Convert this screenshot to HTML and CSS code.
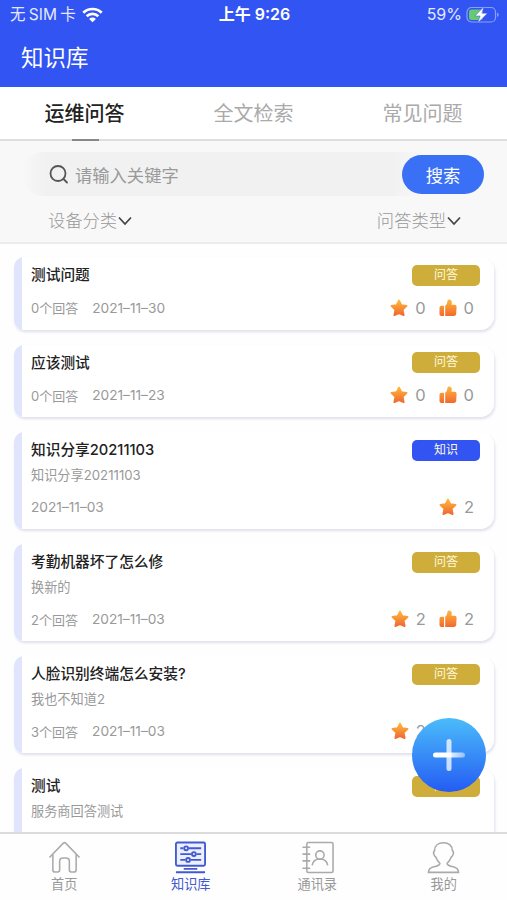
FILE: index.html
```
<!DOCTYPE html>
<html lang="zh-CN">
<head>
  <meta charset="UTF-8" />
  <meta name="viewport" content="width=device-width, initial-scale=1" />
  <title>知识库</title>
  <link rel="stylesheet" href="styles.css">
</head>
<body>
  <svg class="defs" width="0" height="0">
    <defs>
      <linearGradient id="orange" x1="0" y1="0" x2="0" y2="1">
        <stop offset="0" stop-color="#fcb93c" />
        <stop offset="1" stop-color="#f2682e" />
      </linearGradient>
      <linearGradient id="plus" x1="0" y1="0" x2="1" y2="0">
        <stop offset="0.4" stop-color="#fff" />
        <stop offset="1" stop-color="#fff" stop-opacity="0.45" />
      </linearGradient>
      <symbol id="star" viewBox="0 0 18 18">
        <path d="M9 1.4 11.3 6l5.3.8-3.9 3.8 1 5.6L9 14.3l-4.7 1.9 1-5.6L1.4 6.8 6.7 6Z" fill="url(#orange)" stroke="url(#orange)" stroke-width="1.7" stroke-linejoin="round" />
      </symbol>
      <symbol id="thumb" viewBox="0 0 18 18">
        <path d="M2.4 6.8H5v10.300H2.400Q.500 17.100.500 15.300V8.700Q.500 6.800 2.400 6.800ZM6.200 6.800Q8.300 5.300 8.300 2.700 8.300.500 10 .500 12.800.500 12.800 3.500L12.500 5.800H15.500Q17.700 5.800 17.600 8L17.200 15Q17 17.100 14.800 17.100H6.200Z" fill="url(#orange)" />
      </symbol>
    </defs>
  </svg>

  <header class="header">
    <div class="status">
      <div class="carrier">
        <span>无 SIM 卡</span>
        <svg width="21" height="16" viewBox="0 0 21 16" fill="none" stroke="#fff" stroke-width="2.7">
          <path d="M1.300 5.800a13 13 0 0 1 18.400 0M4.700 9.300a8.200 8.200 0 0 1 11.600 0" />
          <path d="M7.100 11.900a4.900 4.900 0 0 1 6.800 0L10.500 15.300Z" fill="#fff" stroke="none" />
        </svg>
      </div>
      <div class="time">上午 9:26</div>
      <div class="battery">
        <span>59%</span>
        <svg width="33" height="18" viewBox="0 0 33 18">
          <rect x="1" y="1.500" width="28.500" height="14.500" rx="4.500" fill="none" stroke="#8c9ff8" stroke-width="1.200" />
          <path d="M31 6.500v4.500q1.800-.7 1.800-2.250T31 6.500Z" fill="#8c9ff8" />
          <rect x="3" y="3.500" width="14" height="10.500" rx="2.500" fill="#66ca70" />
          <path d="M18 .600 8.900 10h5.200l-2.400 7L21.500 7.200h-5.600Z" fill="#fff" stroke="#3254f3" stroke-width=".5" />
        </svg>
      </div>
    </div>
    <h1 class="page-title">知识库</h1>
  </header>

  <nav class="tabs">
    <a class="tab active">运维问答</a>
    <a class="tab">全文检索</a>
    <a class="tab">常见问题</a>
  </nav>

  <section class="search">
    <div class="search-bar">
      <svg width="20" height="20" viewBox="0 0 20 20" fill="none" stroke="#555" stroke-width="1.800" stroke-linecap="round">
        <circle cx="9" cy="9.500" r="7.500" />
        <path d="m14.500 15 3.500 3.500" />
      </svg>
      <span class="placeholder">请输入关键字</span>
      <button class="search-btn">搜索</button>
    </div>
    <div class="filters">
      <span class="filter">设备分类<svg width="14" height="10" viewBox="0 0 14 10"><path d="m1 1.500 6 6.500 6-6.500" /></svg></span>
      <span class="filter">问答类型<svg width="14" height="10" viewBox="0 0 14 10"><path d="m1 1.500 6 6.500 6-6.500" /></svg></span>
    </div>
  </section>

  <main class="list">
    <article class="card">
      <div class="card-head"><h2>测试问题</h2><span class="tag">问答</span></div>
      <div class="card-foot">
        <span class="answers">0个回答</span><span class="date">2021–11–30</span>
        <div class="counts">
          <span class="count"><svg><use href="#star" /></svg>0</span>
          <span class="count"><svg><use href="#thumb" /></svg>0</span>
        </div>
      </div>
    </article>

    <article class="card">
      <div class="card-head"><h2>应该测试</h2><span class="tag">问答</span></div>
      <div class="card-foot">
        <span class="answers">0个回答</span><span class="date">2021–11–23</span>
        <div class="counts">
          <span class="count"><svg><use href="#star" /></svg>0</span>
          <span class="count"><svg><use href="#thumb" /></svg>0</span>
        </div>
      </div>
    </article>

    <article class="card">
      <div class="card-head"><h2>知识分享20211103</h2><span class="tag tag-blue">知识</span></div>
      <p class="desc">知识分享20211103</p>
      <div class="card-foot">
        <span class="date">2021–11–03</span>
        <div class="counts">
          <span class="count"><svg><use href="#star" /></svg>2</span>
        </div>
      </div>
    </article>

    <article class="card">
      <div class="card-head"><h2>考勤机器坏了怎么修</h2><span class="tag">问答</span></div>
      <p class="desc">换新的</p>
      <div class="card-foot">
        <span class="answers">2个回答</span><span class="date">2021–11–03</span>
        <div class="counts">
          <span class="count"><svg><use href="#star" /></svg>2</span>
          <span class="count"><svg><use href="#thumb" /></svg>2</span>
        </div>
      </div>
    </article>

    <article class="card">
      <div class="card-head"><h2>人脸识别终端怎么安装?</h2><span class="tag">问答</span></div>
      <p class="desc">我也不知道2</p>
      <div class="card-foot">
        <span class="answers">3个回答</span><span class="date">2021–11–03</span>
        <div class="counts">
          <span class="count"><svg><use href="#star" /></svg>2</span>
          <span class="count"><svg><use href="#thumb" /></svg>2</span>
        </div>
      </div>
    </article>

    <article class="card">
      <div class="card-head"><h2>测试</h2><span class="tag">问答</span></div>
      <p class="desc">服务商回答测试</p>
      <div class="card-foot"></div>
    </article>
  </main>

  <button class="add-btn" aria-label="添加">
    <svg width="34" height="34" viewBox="0 0 34 34">
      <rect x="14.500" y="1" width="5" height="32" rx="2.500" fill="#fff" opacity=".75" />
      <rect x="1" y="14.500" width="32" height="5" rx="2.500" fill="url(#plus)" />
    </svg>
  </button>

  <nav class="tabbar">
    <a class="tabbar-item">
      <svg width="33" height="33" viewBox="0 0 34 34">
        <path d="M1.500 17 15.800 2.200q1.200-1.100 2.400 0L32.500 17M5 14v15.500q0 2.500 2.500 2.500h2.500q2 0 2-2v-9q0-3.500 3.500-3.500h3q3.500 0 3.500 3.500v9q0 2 2 2h2.500q2.500 0 2.500-2.500V14" />
      </svg>
      首页
    </a>
    <a class="tabbar-item active">
      <svg width="33" height="33" viewBox="0 0 34 34">
        <rect x="2" y="1.500" width="30" height="24" rx="1.500" fill="#eaf0ff" />
        <path d="M6.500 7.500h3m6 0h12.500M6.500 13.500h11m6 0h4.500M6.500 19.500h5m6 0h10.500M10 28.700h14M2 32.200h30" />
        <circle cx="12.500" cy="7.500" r="2" /><circle cx="20.500" cy="13.500" r="2" /><circle cx="14.500" cy="19.500" r="2" />
      </svg>
      知识库
    </a>
    <a class="tabbar-item">
      <svg width="33" height="33" viewBox="0 0 34 34">
        <rect x="6" y="1.500" width="27" height="31" rx="1.500" />
        <path d="M1.500 6.500h8M1.500 13.500h8M1.500 20.500h8M1.500 28h8M11.500 25q1-6.500 8-6.500t8 6.500" />
        <circle cx="19.500" cy="14.500" r="4.300" />
      </svg>
      通讯录
    </a>
    <a class="tabbar-item">
      <svg width="33" height="33" viewBox="0 0 34 34">
        <path d="M17 1.800C11.500 1.800 7.800 5 7.800 10Q6.200 11 7 13.500q.5 2 2 3 1.500 4 4.300 6.500Q13 25.500 7 26.500 1.700 27.800 1.500 32.300H32.500Q32.300 27.800 27 26.500 21 25.500 20.700 23q2.800-2.500 4.300-6.500 1.500-1 2-3 .8-2.500-.8-3.500C26.200 5 22.500 1.800 17 1.800Z" />
      </svg>
      我的
    </a>
  </nav>
</body>
</html>
```
FILE: styles.css
```
* {
  box-sizing: border-box;
}
body {
  margin: 0;
  height: 900px;
  display: flex;
  flex-direction: column;
  overflow: hidden;
  background: #fefefe;
  font-family: Inter, "Noto Sans CJK SC", sans-serif;
  color: #222;
}
h1, h2, p {
  margin: 0;
}
button {
  border: none;
  padding: 0;
  font-family: inherit;
}
.defs {
  position: absolute;
}
.header {
  flex: none;
  height: 87px;
  background: #3254f3;
  color: #fff;
}
.status {
  display: grid;
  grid-template-columns: 1fr auto 1fr;
  align-items: center;
  height: 29px;
  padding: 0 8px 0 10px;
  font-size: 16px;
  line-height: 29px;
}
.carrier,
.battery {
  display: flex;
  align-items: center;
  gap: 6px;
  color: #e4e9ff;
}
.carrier span {
  font-size: 15.5px;
  word-spacing: -1px;
}
.battery {
  justify-content: flex-end;
  gap: 4px;
}
.time {
  font-weight: 600;
  font-size: 16px;
}
.page-title {
  padding: 1px 0 0 21px;
  font-size: 22.5px;
  font-weight: 400;
  line-height: 56px;
}
.tabs {
  flex: none;
  display: flex;
  height: 54px;
  background: #fff;
  border-bottom: 2px solid #dedede;
}
.tab {
  position: relative;
  flex: 1;
  text-align: center;
  font-size: 20px;
  line-height: 55px;
  color: #aaa;
}
.tab.active {
  color: #222;
  font-weight: 500;
}
.tab.active::after {
  content: "";
  position: absolute;
  left: 50%;
  bottom: -2px;
  width: 27px;
  height: 2px;
  margin-left: -13px;
  background: #888;
}
.search {
  flex: none;
  height: 103px;
  padding: 11px 22px 0;
  background: #f8f8f8;
  border-bottom: 2px solid #ececf0;
}
.search-bar {
  display: flex;
  align-items: center;
  height: 44px;
  padding: 0 1px 0 27px;
  border-radius: 22px;
  background: linear-gradient(to right, #f8f8f8, #f1f1f1 24px, #f1f1f1 370px, #f8f8f8 400px);
}
.placeholder {
  flex: 1;
  margin-left: 6px;
  font-size: 17.3px;
  color: #999;
}
.search-btn {
  width: 82px;
  height: 39px;
  border-radius: 20px;
  background: #3a70f6;
  color: #fff;
  font-size: 17.3px;
}
.filters {
  display: flex;
  justify-content: space-between;
  padding: 0 24px 0 26px;
  line-height: 49px;
  font-size: 17.3px;
  font-weight: 300;
  color: #999;
}
.filter {
  display: flex;
  align-items: center;
}
.filter svg {
  margin-left: 1px;
  fill: none;
  stroke: #444;
  stroke-width: 1.7;
}
.list {
  flex: 1;
  min-height: 0;
  overflow: hidden;
  padding: 13px 13px 0 14px;
}
.card {
  margin-bottom: 15px;
  padding: 7px 14px 11px 17px;
  border-radius: 10px 14px 14px 10px;
  background: linear-gradient(to right, #e0e4fd 8px, #fff 8px);
  box-shadow: 1px 2px 3px #dddfeb;
}
.card-head {
  display: flex;
  justify-content: space-between;
  align-items: center;
  height: 22px;
}
.card-head h2 {
  font-size: 14.7px;
  font-weight: 500;
  line-height: 22px;
}
.tag {
  width: 68px;
  height: 21px;
  border-radius: 5px;
  background: #cfad3b;
  color: #fff9df;
  font-size: 12px;
  line-height: 19px;
  text-align: center;
}
.tag-blue {
  background: #3254f3;
}
.desc {
  margin-top: 4px;
  margin-bottom: -1px;
  font-size: 13.2px;
  line-height: 21.3px;
  color: #999;
}
.card-foot {
  display: flex;
  align-items: center;
  height: 22px;
  margin-top: 10.7px;
  font-size: 13px;
  color: #999;
}
.answers {
  margin-right: 14px;
}
.date {
  font-size: 13.7px;
}
.counts {
  display: flex;
  gap: 13px;
  margin-left: auto;
  margin-right: 6px;
}
.count {
  display: flex;
  align-items: center;
  gap: 7px;
  font-size: 16.5px;
}
.count svg {
  width: 18px;
  height: 18px;
}
.add-btn {
  position: absolute;
  right: 21px;
  top: 718px;
  width: 74px;
  height: 74px;
  display: flex;
  align-items: center;
  justify-content: center;
  border-radius: 50%;
  background: linear-gradient(#4bbcfa, #245cf3);
}
.tabbar {
  flex: none;
  display: flex;
  height: 68px;
  padding-left: 1px;
  border-top: 2px solid #dcdcdc;
  background: #fefefe;
}
.tabbar-item {
  flex: 1;
  display: flex;
  flex-direction: column;
  align-items: center;
  padding-top: 7px;
  font-size: 13.2px;
  line-height: 20px;
  color: #999;
}
.tabbar-item svg {
  fill: none;
  stroke: #aaa;
  stroke-width: 1.6;
}
.tabbar-item.active {
  color: #4359cf;
}
.tabbar-item.active svg {
  stroke: #4359cf;
  stroke-width: 1.9;
}
```
